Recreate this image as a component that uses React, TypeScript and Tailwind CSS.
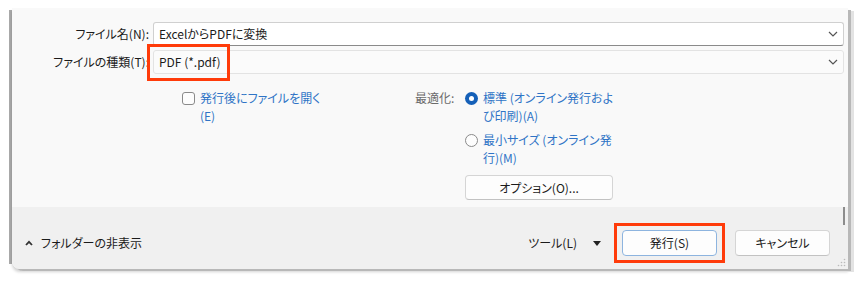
import React from 'react'

const jp = { fontFamily: '"Noto Sans CJK JP", "Noto Sans", sans-serif' }

const Chevron: React.FC = () => (
  <svg width="10" height="6" viewBox="0 0 10 6" className="text-[#555]">
    <polyline points="1,1 5,5 9,1" fill="none" stroke="currentColor" strokeWidth="1.2" />
  </svg>
)

const Btn: React.FC<{ label: string; focus?: boolean; className?: string }> = ({ label, focus, className }) => (
  <div
    className={`flex items-center justify-center rounded-[4px] bg-[#fdfdfd] text-[12px] text-[#1b1b1b] border ${
      focus ? 'border-[#8db4df]' : 'border-[#d5d5d5] border-b-[#c2c2c2]'
    } ${className ?? ''}`}
  >
    {label}
  </div>
)

export default function App() {
  return (
    <div className="w-[863px] h-[285px] bg-white overflow-hidden [font-feature-settings:'palt']" style={jp}>
      <div className="flex pt-[8px] pl-[9px]">
        {/* excel frame edge */}
        <div className="w-[3px] h-[254px] mt-[2px] bg-[#a9a9a9]" />

        {/* dialog */}
        <div className="relative w-[836px] h-[261px] rounded-bl-[8px] overflow-hidden shadow-[3px_2px_0_#b8b8b8,6px_3px_0_#e3e3e3,0_3px_3px_rgba(0,0,0,0.18)] flex flex-col">
          {/* upper area */}
          <div className="bg-[#f9f9f9] h-[199px] pt-[14px] text-[12px] text-[#1b1b1b]">
            <div className="flex items-center h-[24px]">
              <div className="w-[141px] text-right pr-[4px]">ファイル名(N):</div>
              <div className="w-[691px] h-[24px] bg-white border border-[#d0d0d0] border-b-[#8a8a8a] rounded-[3px] flex items-center justify-between pl-[5px] pr-[5px]">
                <span>ExcelからPDFに変換</span>
                <Chevron />
              </div>
            </div>
            <div className="flex items-center h-[24px] mt-[4px]">
              <div className="w-[141px] text-right pr-[4px]">ファイルの種類(T):</div>
              <div className="w-[691px] h-[24px] bg-[#fbfbfb] border border-[#e3e3e3] rounded-[3px] flex items-center justify-between pl-[5px] pr-[5px]">
                <span>PDF (*.pdf)</span>
                <Chevron />
              </div>
            </div>

            {/* options */}
            <div className="flex mt-[15px] leading-[18px]">
              <div className="w-[403px] pl-[170px] flex items-start">
                <div className="w-[13px] h-[13px] mt-[3px] rounded-[3px] border border-[#8a8a8a] bg-[#fdfdfd]" />
                <div className="ml-[5px] text-[#2f74c6]">
                  発行後にファイルを開く
                  <br />
                  (E)
                </div>
              </div>
              <div className="flex items-start">
                <div className="w-[50px] text-[#6b6b6b]">最適化:</div>
                <div className="flex flex-col">
                  <div className="flex items-start">
                    <div className="w-[13px] h-[13px] mt-[3px] rounded-full bg-[#1560b8] flex items-center justify-center">
                      <div className="w-[5px] h-[5px] rounded-full bg-white" />
                    </div>
                    <div className="ml-[5px] text-[#2f74c6]">
                      標準 (オンライン発行およ
                      <br />
                      び印刷)(A)
                    </div>
                  </div>
                  <div className="flex items-start mt-[6px]">
                    <div className="w-[13px] h-[13px] mt-[3px] rounded-full border border-[#8a8a8a] bg-[#fdfdfd]" />
                    <div className="ml-[5px] text-[#2f74c6]">
                      最小サイズ (オンライン発
                      <br />
                      行)(M)
                    </div>
                  </div>
                  <Btn label="オプション(O)..." className="w-[148px] h-[25px] mt-[8px]" />
                </div>
              </div>
            </div>
          </div>

          {/* footer */}
          <div className="flex-1 bg-[#f0f0f0] flex items-start pt-[23px] pl-[13px] pr-[18px] text-[12px] text-[#1b1b1b]">
            <div className="flex items-center h-[26px]">
              <svg width="8" height="6" viewBox="0 0 8 6">
                <polyline points="1,5 4,1.8 7,5" fill="none" stroke="#333" strokeWidth="1.8" />
              </svg>
              <span className="ml-[8px]">フォルダーの非表示</span>
            </div>
            <div className="flex-1" />
            <div className="flex items-center h-[26px]">
              <span>ツール(L)</span>
              <svg width="8" height="5" viewBox="0 0 8 5" className="ml-[16px]">
                <polygon points="0,0 8,0 4,5" fill="#222" />
              </svg>
            </div>
            <Btn label="発行(S)" focus className="w-[95px] h-[26px] ml-[21px]" />
            <Btn label="キャンセル" className="w-[95px] h-[26px] ml-[18px]" />
          </div>

          {/* scroll remnant + grip */}
          <div className="absolute right-[3px] top-[199px] w-[2px] h-[18px] bg-[#8c8c8c]" />
          <svg className="absolute right-[2px] bottom-[2px]" width="9" height="9" viewBox="0 0 9 9">
            <circle cx="7.5" cy="1.5" r="0.8" fill="#bbb" />
            <circle cx="4.5" cy="4.5" r="0.8" fill="#bbb" />
            <circle cx="7.5" cy="4.5" r="0.8" fill="#bbb" />
            <circle cx="1.5" cy="7.5" r="0.8" fill="#bbb" />
            <circle cx="4.5" cy="7.5" r="0.8" fill="#bbb" />
            <circle cx="7.5" cy="7.5" r="0.8" fill="#bbb" />
          </svg>

          {/* red annotation boxes */}
          <div className="absolute left-[135px] top-[36px] w-[83px] h-[37px] border-[3px] border-[#ff3b0a]" />
          <div className="absolute left-[602px] top-[215px] w-[111px] h-[40px] border-[3px] border-[#ff3b0a]" />
        </div>
      </div>
    </div>
  )
}
